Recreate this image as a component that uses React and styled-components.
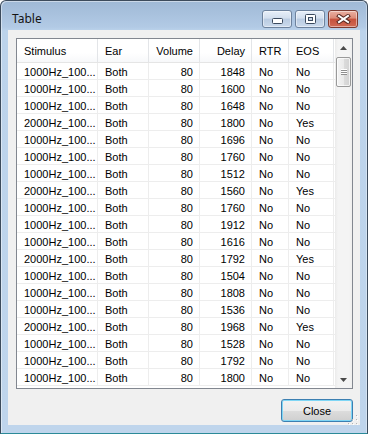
import React from "react";
import styled, { createGlobalStyle } from "styled-components";

const GlobalStyle = createGlobalStyle`
  html, body {
    margin: 0;
    padding: 0;
    background: #ffffff;
  }
  body {
    font-family: "Liberation Sans", Arial, sans-serif;
  }
`;

const Window = styled.div`
  width: 368px;
  height: 434px;
  box-sizing: border-box;
  border: 1px solid #3c4b5c;
  border-bottom-color: #2b8a98;
  border-radius: 6px 6px 0 0;
  background: linear-gradient(#9fb9d6 0, #b2cae5 26px, #bcd3eb 30px, #bfd5ec 100%);
  box-shadow: inset 1px 1px 0 rgba(255, 255, 255, 0.45), inset -1px 0 0 rgba(255, 255, 255, 0.35);
  padding: 0 7px 8px;
  display: flex;
  flex-direction: column;
`;

const TitleBar = styled.div`
  height: 29px;
  flex: none;
  display: flex;
  align-items: flex-end;
  padding-bottom: 2px;
  box-sizing: border-box;
`;

const Title = styled.div`
  flex: 1;
  margin-left: 4px;
  padding-bottom: 1px;
  font-family: "Noto Sans", "Open Sans", sans-serif;
  font-size: 12px;
  line-height: 17px;
  color: #141414;
`;

const CaptionButtons = styled.div`
  display: flex;
  gap: 3px;
  margin-right: 2px;
`;

const CaptionButton = styled.div`
  width: 30px;
  height: 18px;
  box-sizing: border-box;
  border: 1px solid ${(p) => (p.$close ? "#7c3a30" : "#6d829d")};
  border-radius: 3px;
  background: ${(p) =>
    p.$close
      ? "linear-gradient(#eab0a2 0, #dd8b78 45%, #c6513c 50%, #d06a55 100%)"
      : "linear-gradient(#e7eff9 0, #d3dfee 45%, #b9cbe1 50%, #cbdaec 100%)"};
  box-shadow: inset 0 0 0 1px rgba(255, 255, 255, 0.45);
  display: flex;
  justify-content: center;
  align-items: ${(p) => p.$align || "center"};
  padding-bottom: ${(p) => (p.$align === "flex-end" ? "3px" : "0")};
`;

const Client = styled.div`
  flex: 1;
  position: relative;
  background: #f0f0f0;
  padding: 8px 7px 0 8px;
  display: flex;
  flex-direction: column;
`;

const ListView = styled.div`
  width: 337px;
  height: 351px;
  box-sizing: border-box;
  border: 1px solid #828790;
  background: #ffffff;
  display: flex;
`;

const Grid = styled.div`
  flex: 1;
  overflow: hidden;
  font-size: 11px;
  color: #000000;
`;

const HeaderRow = styled.div`
  display: flex;
  height: 24px;
  box-sizing: border-box;
  border-bottom: 1px solid #e5e5e5;
  background: linear-gradient(#ffffff, #ffffff 60%, #f7f8fa);
`;

const HeaderCell = styled.div`
  flex: none;
  width: ${(p) => p.$w}px;
  box-sizing: border-box;
  border-right: 1px solid #e3e5e8;
  padding: 2px 6px 0 7px;
  line-height: 21px;
  text-align: ${(p) => (p.$right ? "right" : "left")};
  white-space: nowrap;
  overflow: hidden;
`;

const Row = styled.div`
  display: flex;
  height: 17px;
  box-sizing: border-box;
  border-bottom: 1px solid #ededed;
`;

const Cell = styled.div`
  flex: none;
  width: ${(p) => p.$w}px;
  height: 16px;
  box-sizing: border-box;
  border-right: 1px solid #ededed;
  padding: 2px 6px 0 7px;
  line-height: 14px;
  text-align: ${(p) => (p.$right ? "right" : "left")};
  white-space: nowrap;
  overflow: hidden;
`;

const ScrollBar = styled.div`
  width: 17px;
  flex: none;
  display: flex;
  flex-direction: column;
  background: linear-gradient(to right, #ebebeb 0, #f4f4f4 3px, #f4f4f4 14px, #eeeeee 100%);
`;

const ArrowButton = styled.div`
  height: 17px;
  flex: none;
  display: flex;
  justify-content: center;
  align-items: center;
`;

const Thumb = styled.div`
  height: 30px;
  margin: 1px 1px 0;
  box-sizing: border-box;
  border: 1px solid #9a9a9a;
  border-radius: 2px;
  background: linear-gradient(to right, #f4f4f4 0, #eaeaea 50%, #dcdcdc 51%, #d2d2d2 100%);
  box-shadow: inset 0 0 0 1px rgba(255, 255, 255, 0.7);
  display: flex;
  justify-content: center;
  align-items: center;
`;

const Track = styled.div`
  flex: 1;
`;

const Footer = styled.div`
  display: flex;
  justify-content: flex-end;
  margin-top: 10px;
`;

const Button = styled.button`
  width: 72px;
  height: 23px;
  box-sizing: border-box;
  border: 1px solid #3c7fb1;
  border-radius: 3px;
  background: linear-gradient(#f2f2f2 0, #ebebeb 50%, #dddddd 51%, #cfcfcf 100%);
  box-shadow: inset 0 0 0 1px #7fd6f5;
  font-family: "Liberation Sans", Arial, sans-serif;
  font-size: 11px;
  color: #000000;
  padding: 0;
`;

const SizeGrip = styled.div`
  position: absolute;
  right: 1px;
  bottom: 1px;
  width: 12px;
  height: 12px;
`;

const columns = [
  { title: "Stimulus", w: 81 },
  { title: "Ear", w: 51 },
  { title: "Volume", w: 51, right: true },
  { title: "Delay", w: 52, right: true },
  { title: "RTR", w: 37 },
  { title: "EOS", w: 45 },
];

const delays = [1848, 1600, 1648, 1800, 1696, 1760, 1512, 1560, 1760, 1912, 1616, 1792, 1504, 1808, 1536, 1968, 1528, 1792, 1800];
const twoK = [3, 7, 11, 15];

const rows = delays.map((d, i) => {
  const two = twoK.includes(i);
  return [two ? "2000Hz_100..." : "1000Hz_100...", "Both", "80", String(d), "No", two ? "Yes" : "No"];
});

function MinIcon() {
  return (
    <svg width="11" height="6" viewBox="0 0 11 6">
      <rect x="0.5" y="0.5" width="10" height="5" rx="1" fill="#ffffff" stroke="#3b4a5e" />
    </svg>
  );
}

function MaxIcon() {
  return (
    <svg width="11" height="10" viewBox="0 0 11 10">
      <rect x="0.5" y="0.5" width="10" height="9" rx="1" fill="#ffffff" stroke="#3b4a5e" />
      <rect x="3.5" y="3.5" width="4" height="3" fill="#c9d6e6" stroke="#3b4a5e" />
    </svg>
  );
}

function CloseIcon() {
  return (
    <svg width="15" height="10" viewBox="0 0 15 10">
      <path d="M3 2 L12 8 M12 2 L3 8" stroke="#5b2b24" strokeWidth="4" strokeLinecap="square" />
      <path d="M3 2 L12 8 M12 2 L3 8" stroke="#ffffff" strokeWidth="2" strokeLinecap="square" />
    </svg>
  );
}

function Arrow({ down }) {
  return (
    <svg width="7" height="4" viewBox="0 0 7 4">
      <path d={down ? "M0 0 H7 L3.5 4 Z" : "M0 4 H7 L3.5 0 Z"} fill="#4a4a4a" />
    </svg>
  );
}

function Grip() {
  return (
    <svg width="8" height="7" viewBox="0 0 8 7">
      {[1, 3, 5].map((y) => (
        <g key={y}>
          <rect x="1" y={y} width="6" height="1" fill="#8f8f8f" />
          <rect x="1" y={y - 1} width="6" height="1" fill="#ffffff" />
        </g>
      ))}
    </svg>
  );
}

function GripDots() {
  const dots = [
    [9, 1],
    [9, 5],
    [5, 5],
    [9, 9],
    [5, 9],
    [1, 9],
  ];
  return (
    <svg width="12" height="12" viewBox="0 0 12 12">
      {dots.map(([x, y]) => (
        <g key={`${x}-${y}`}>
          <rect x={x + 1} y={y + 1} width="1" height="1" fill="#ffffff" />
          <rect x={x} y={y} width="1" height="1" fill="#b4b4b4" />
        </g>
      ))}
    </svg>
  );
}

export default function App() {
  return (
    <>
      <GlobalStyle />
      <Window>
        <TitleBar>
          <Title>Table</Title>
          <CaptionButtons>
            <CaptionButton $align="flex-end">
              <MinIcon />
            </CaptionButton>
            <CaptionButton>
              <MaxIcon />
            </CaptionButton>
            <CaptionButton $close>
              <CloseIcon />
            </CaptionButton>
          </CaptionButtons>
        </TitleBar>
        <Client>
          <ListView>
            <Grid>
              <HeaderRow>
                {columns.map((c) => (
                  <HeaderCell key={c.title} $w={c.w} $right={c.right}>
                    {c.title}
                  </HeaderCell>
                ))}
              </HeaderRow>
              {rows.map((r, i) => (
                <Row key={i}>
                  {r.map((v, j) => (
                    <Cell key={j} $w={columns[j].w} $right={columns[j].right}>
                      {v}
                    </Cell>
                  ))}
                </Row>
              ))}
            </Grid>
            <ScrollBar>
              <ArrowButton>
                <Arrow />
              </ArrowButton>
              <Thumb>
                <Grip />
              </Thumb>
              <Track />
              <ArrowButton>
                <Arrow down />
              </ArrowButton>
            </ScrollBar>
          </ListView>
          <Footer>
            <Button>Close</Button>
          </Footer>
          <SizeGrip>
            <GripDots />
          </SizeGrip>
        </Client>
      </Window>
    </>
  );
}
